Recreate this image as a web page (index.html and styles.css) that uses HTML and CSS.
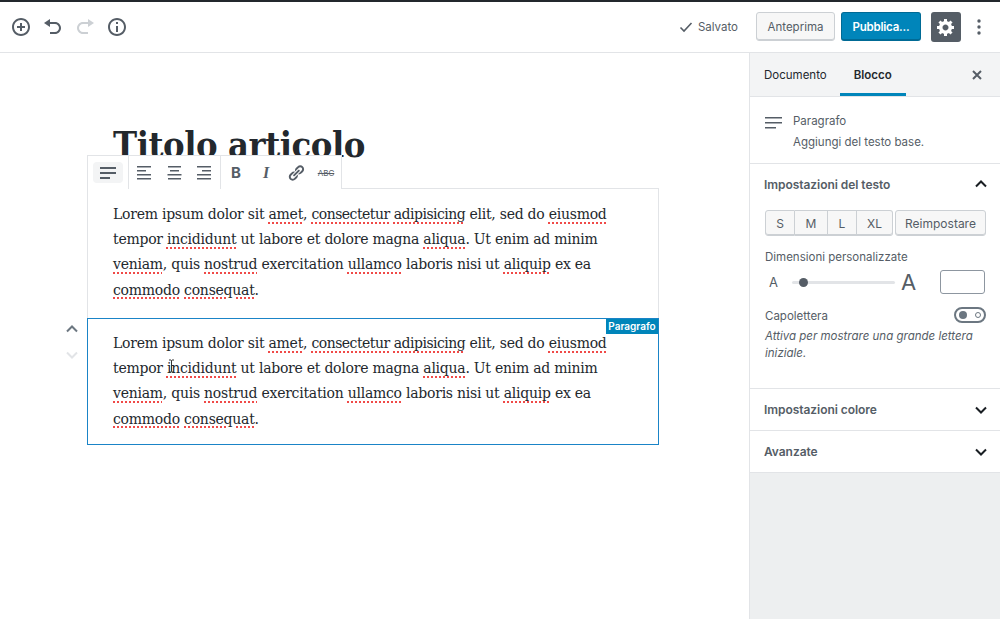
FILE: index.html
```html
<!DOCTYPE html>
<html lang="it">
<head>
<meta charset="utf-8">
<title>Titolo articolo</title>
<link rel="stylesheet" href="styles.css">
</head>
<body>
<div class="app">
  <header class="topbar">
    <div class="tools">
      <span class="tool"><svg width="20" height="20" viewBox="0 0 20 20"><path d="M10 1c-5 0-9 4-9 9s4 9 9 9 9-4 9-9-4-9-9-9zm0 16c-3.900 0-7-3.100-7-7s3.100-7 7-7 7 3.100 7 7-3.100 7-7 7zm1-11H9v3H6v2h3v3h2v-3h3V9h-3V6z"/></svg></span>
      <span class="tool"><svg width="20" height="20" viewBox="0 0 20 20"><path d="M12 5H7V2L1 6l6 4V7h5c2.200 0 4 1.800 4 4s-1.800 4-4 4H7v2h5c3.300 0 6-2.700 6-6s-2.700-6-6-6z"/></svg></span>
      <span class="tool off"><svg width="20" height="20" viewBox="0 0 20 20"><path d="M8 5h5V2l6 4-6 4V7H8c-2.200 0-4 1.800-4 4s1.800 4 4 4h5v2H8c-3.300 0-6-2.700-6-6s2.700-6 6-6z"/></svg></span>
      <span class="tool"><svg width="20" height="20" viewBox="0 0 20 20"><path d="M10 1c-5 0-9 4-9 9s4 9 9 9 9-4 9-9-4-9-9-9zm0 16c-3.900 0-7-3.100-7-7s3.100-7 7-7 7 3.100 7 7-3.100 7-7 7zM9 9h2v6H9V9zm0-4h2v2H9V5z"/></svg></span>
    </div>
    <div class="actions">
      <span class="saved"><svg width="14" height="14" viewBox="0 0 14 14"><path d="M1.500 7.500l3.500 3.500 7.500-8" fill="none" stroke="#555d66" stroke-width="1.600"/></svg>Salvato</span>
      <span class="btn preview">Anteprima</span>
      <span class="btn publish">Pubblica...</span>
      <span class="gear"><svg width="20" height="20" viewBox="0 0 20 20"><path d="M18 12h-2.180c-.17.700-.44 1.350-.81 1.930l1.540 1.540-2.100 2.100-1.540-1.540c-.58.360-1.230.630-1.910.790V19H8v-2.180c-.68-.16-1.330-.43-1.910-.79l-1.540 1.540-2.120-2.120 1.540-1.540c-.36-.58-.63-1.230-.79-1.910H1V9.030h2.170c.160-.7.440-1.350.800-1.940L2.430 5.550l2.100-2.100 1.540 1.540c.580-.37 1.240-.64 1.930-.81V2h3v2.180c.680.160 1.330.430 1.910.790l1.540-1.540 2.120 2.120-1.540 1.540c.360.590.640 1.240.800 1.940H18V12zm-8.500 1.500c1.660 0 3-1.340 3-3s-1.340-3-3-3-3 1.340-3 3 1.340 3 3 3z"/></svg></span>
      <span class="more"><svg width="4" height="16" viewBox="0 0 4 16"><circle cx="2" cy="2" r="1.700"/><circle cx="2" cy="8" r="1.700"/><circle cx="2" cy="14" r="1.700"/></svg></span>
    </div>
  </header>
  <div class="main">
    <main class="editor">
      <h1 class="post-title">Titolo articolo</h1>
      <div class="block">
        <div class="toolbar">
          <div class="group first">
            <span class="tb active"><svg width="16" height="12" viewBox="0 0 16 12"><path d="M0 0h16v2H0zM0 5h16v2H0zM0 10h10v2H0z"/></svg></span>
          </div>
          <div class="group mid">
            <span class="tb"><svg width="15" height="14" viewBox="0 0 15 14"><path d="M0 0h14v1.500H0zM0 4h9v1.500H0zM0 8h14v1.500H0zM0 12h14v1.500H0z"/></svg></span>
            <span class="tb"><svg width="15" height="14" viewBox="0 0 15 14"><path d="M1 0h13v1.500H1zM3 4h9v1.500H3zM0.500 8h14v1.500H.500zM1 12h13v1.500H1z"/></svg></span>
            <span class="tb"><svg width="15" height="14" viewBox="0 0 15 14"><path d="M1 0h14v1.500H1zM6 4h9v1.500H6zM1 8h14v1.500H1zM1 12h14v1.500H1z"/></svg></span>
          </div>
          <div class="group">
            <span class="tb glyph-b">B</span>
            <span class="tb glyph-i">I</span>
            <span class="tb"><svg width="18" height="18" viewBox="0 0 20 20"><path d="M17.740 2.760c1.680 1.690 1.680 4.410 0 6.100l-1.530 1.520c-1.120 1.120-2.700 1.470-4.140 1.090l2.620-2.610.76-.77.76-.76c.84-.84.84-2.200 0-3.040-.84-.85-2.200-.85-3.040 0l-.77.76-3.380 3.380c-.37-1.440-.02-3.020 1.100-4.140l1.520-1.530c1.690-1.680 4.420-1.680 6.100 0zM8.590 13.430l5.340-5.340c.42-.42.42-1.100 0-1.520-.44-.43-1.130-.39-1.530 0l-5.330 5.340c-.42.420-.42 1.100 0 1.520.44.430 1.130.390 1.520 0zm-.76 2.290l4.140-4.150c.380 1.440.030 3.020-1.090 4.140l-1.520 1.530c-1.690 1.680-4.410 1.680-6.100 0-1.680-1.680-1.680-4.420 0-6.100l1.530-1.520c1.120-1.120 2.700-1.470 4.140-1.100l-4.140 4.150c-.85.840-.85 2.200 0 3.050.840.840 2.200.840 3.040 0z"/></svg></span>
            <span class="tb glyph-s">ABC</span>
          </div>
        </div>
        <p class="para">Lorem ipsum dolor sit <span class="sp">amet</span>, <span class="sp t">consectetur</span> <span class="sp t">adipisicing</span> elit, sed do <span class="sp">eiusmod</span><br>tempor <span class="sp">incididunt</span> ut labore et dolore magna <span class="sp">aliqua</span>. Ut enim ad minim<br><span class="sp">veniam</span>, quis <span class="sp">nostrud</span> exercitation <span class="sp">ullamco</span> laboris nisi ut <span class="sp">aliquip</span> ex ea<br><span class="sp">commodo</span> <span class="sp">consequat</span>.</p>
      </div>
      <div class="block selected">
        <div class="mover">
          <svg width="14" height="10" viewBox="0 0 14 10"><path d="M2 7.500l5-5 5 5" fill="none" stroke="#6c7781" stroke-width="2"/></svg>
          <svg width="14" height="10" viewBox="0 0 14 10"><path d="M2 2.500l5 5 5-5" fill="none" stroke="#e2e4e7" stroke-width="2"/></svg>
        </div>
        <span class="badge">Paragrafo</span>
        <p class="para">Lorem ipsum dolor sit <span class="sp">amet</span>, <span class="sp t">consectetur</span> <span class="sp t">adipisicing</span> elit, sed do <span class="sp">eiusmod</span><br>tempor <span class="sp">incididunt</span> ut labore et dolore magna <span class="sp">aliqua</span>. Ut enim ad minim<br><span class="sp">veniam</span>, quis <span class="sp">nostrud</span> exercitation <span class="sp">ullamco</span> laboris nisi ut <span class="sp">aliquip</span> ex ea<br><span class="sp">commodo</span> <span class="sp">consequat</span>.</p>
        <svg class="ibeam" width="7" height="14" viewBox="0 0 7 14"><path d="M1 1h2l.500.500L4 1h2M3.500 1.500v11M1 13h2l.500-.5.500.500h2" fill="none" stroke="#333" stroke-width="1"/></svg>
      </div>
    </main>
    <aside class="sidebar">
      <div class="tabs">
        <span class="tab">Documento</span>
        <span class="tab current">Blocco</span>
        <svg class="close" width="10" height="10" viewBox="0 0 10 10"><path d="M1 1l8 8M9 1l-8 8" stroke="#555d66" stroke-width="2"/></svg>
      </div>
      <div class="card">
        <svg width="17" height="12" viewBox="0 0 17 12"><path d="M0 0h17v1.600H0zM0 5h17v1.600H0zM0 10h11v1.600H0z" fill="#555d66"/></svg>
        <div>
          <div class="card-title">Paragrafo</div>
          <div class="card-desc">Aggiungi del testo base.</div>
        </div>
      </div>
      <section class="panel open">
        <div class="panel-head"><span>Impostazioni del testo</span><svg width="12" height="8" viewBox="0 0 12 8"><path d="M1 6.500l5-5 5 5" fill="none" stroke="#191e23" stroke-width="2"/></svg></div>
        <div class="sizes">
          <div class="size-group">
            <span class="sz s">S</span><span class="sz m">M</span><span class="sz l">L</span><span class="sz xl">XL</span>
          </div>
          <span class="sz reset">Reimpostare</span>
        </div>
        <div class="label">Dimensioni personalizzate</div>
        <div class="slider-row">
          <span class="a-small">A</span>
          <span class="track"><span class="knob"></span></span>
          <span class="a-big">A</span>
          <span class="num"></span>
        </div>
        <div class="toggle-row">
          <span class="label-inline">Capolettera</span>
          <span class="toggle"><span class="dot"></span><span class="ring"></span></span>
        </div>
        <p class="help">Attiva per mostrare una grande lettera iniziale.</p>
      </section>
      <section class="panel closed">
        <span>Impostazioni colore</span><svg width="12" height="8" viewBox="0 0 12 8"><path d="M1 1.500l5 5 5-5" fill="none" stroke="#191e23" stroke-width="2"/></svg>
      </section>
      <section class="panel closed">
        <span>Avanzate</span><svg width="12" height="8" viewBox="0 0 12 8"><path d="M1 1.500l5 5 5-5" fill="none" stroke="#191e23" stroke-width="2"/></svg>
      </section>
    </aside>
  </div>
</div>
</body>
</html>
```

FILE: styles.css
```css
* { box-sizing: border-box; }
html, body { margin: 0; height: 100%; overflow: hidden; }
body { background: #fff; color: #191e23; font-family: Inter, "Liberation Sans", sans-serif; font-size: 11.500px; }
.app { height: 100vh; display: flex; flex-direction: column; }

.topbar { height: 53px; flex: none; border-top: 2px solid #23282d; border-bottom: 1px solid #e2e4e7; display: flex; align-items: center; justify-content: space-between; padding: 0 19px 1px 5px; }
.tools { display: flex; }
.tool { width: 32px; height: 32px; display: flex; align-items: center; justify-content: center; }
.tool svg { fill: #555d66; }
.tool.off svg { fill: #ccd0d4; }
.actions { display: flex; align-items: center; }
.saved { display: flex; align-items: center; gap: 5px; color: #555d66; margin-right: 18px; }
.btn { height: 29px; width: 80px; border-radius: 3px; display: flex; align-items: center; justify-content: center; padding-top: 1px; }
.preview { width: 79px; background: #f7f7f7; border: 1px solid #ccd0d4; box-shadow: inset 0 -1px 0 #ccd0d4; color: #555d66; margin-right: 6px; }
.publish { background: #0085ba; border: 1px solid #006a95; border-bottom-width: 2px; color: #fff; font-weight: 600; margin-right: 10px; letter-spacing: -.2px; padding-top: 2px; }
.gear { width: 30px; height: 30px; background: #555d66; border-radius: 3px; display: flex; align-items: center; justify-content: center; margin-right: 16px; }
.gear svg { fill: #fff; }
.more { display: flex; }
.more svg { fill: #555d66; }

.main { flex: 1; display: flex; min-height: 0; }
.editor { flex: 1; padding-top: 69px; }
.post-title { margin: 0 0 0 113px; height: 66px; font: 700 36px/44px "DejaVu Serif", serif; font-stretch: condensed; color: #23282d; letter-spacing: -.45px; white-space: nowrap; }
.block { position: relative; margin-left: 87px; width: 572px; height: 130px; border: 1px solid #e2e4e7; border-bottom: 0; padding: 13px 25px 0; }
.block.selected { height: 127px; padding-top: 12px; border: 1px solid #1a84c7; }
.para { margin: 0; font: 14px/25.200px "DejaVu Serif", serif; color: #23282d; white-space: nowrap; letter-spacing: -.25px; }
.sp { text-decoration: underline dotted #f04a48; text-decoration-thickness: 1.500px; text-underline-offset: 3px; }
.sp.t { letter-spacing: -.52px; }

.toolbar { position: absolute; left: -1px; top: -34px; height: 34px; display: flex; background: #fff; border: 1px solid #e2e4e7; border-bottom: 0; }
.group { display: flex; align-items: center; border-right: 1px solid #e2e4e7; height: 100%; }
.group:last-child { border-right: 0; }
.group.first { padding: 0 5px; }
.group.mid { padding: 0 1.500px 0 1px; }
.mid .tb { width: 29.500px; }
.tb { width: 30px; height: 21px; display: flex; align-items: center; justify-content: center; color: #555d66; }
.tb svg { fill: #555d66; }
.tb.active { background: #f3f4f5; border-radius: 4px; }
.glyph-b { font: 700 15px Inter, sans-serif; }
.glyph-i { font: italic 700 16px "Liberation Serif", serif; }
.glyph-s { font: 8px Inter, sans-serif; text-decoration: line-through; }

.mover { position: absolute; left: -23px; top: 5px; display: flex; flex-direction: column; gap: 16px; }
.badge { position: absolute; right: 0; top: 0; height: 15px; width: 52px; background: #0085ba; color: #fff; font-size: 10px; font-weight: 600; line-height: 15px; text-align: center; }
.ibeam { position: absolute; left: 80px; top: 40px; }

.sidebar { width: 251px; flex: none; border-left: 1px solid #e2e4e7; background: #edeff0; }
.tabs { height: 44px; background: #f3f4f5; border-bottom: 1px solid #e2e4e7; display: flex; align-items: center; position: relative; padding-left: 14px; }
.tab { margin-right: 13px; height: 100%; display: flex; align-items: center; color: #23282d; }
.tab.current { font-weight: 600; padding: 0 14px; box-shadow: inset 0 -3px 0 #0085ba; }
.close { position: absolute; right: 18px; top: 17px; }
.card { height: 67px; background: #fff; border-bottom: 1px solid #e2e4e7; display: flex; gap: 11px; padding: 20px 15px 0; }
.card > svg { flex: none; }
.card-title { color: #555d66; margin-top: -4px; line-height: 16px; }
.card-desc { color: #555d66; margin-top: 5px; line-height: 16px; }
.panel { background: #fff; border-bottom: 1px solid #e2e4e7; }
.panel.open { height: 225px; padding: 0 14px 0 15px; }
.panel.closed { height: 42px; display: flex; align-items: center; justify-content: space-between; padding: 0 13px 0 14px; font-weight: 600; font-size: 12px; letter-spacing: -.05px; color: #555d66; }
.panel-head { height: 46px; padding-bottom: 6px; display: flex; align-items: center; justify-content: space-between; font-weight: 600; font-size: 12px; letter-spacing: -.05px; color: #555d66; margin: 0 -1px; }
.sizes { display: flex; gap: 2px; }
.size-group { display: flex; }
.sz { height: 26px; display: flex; align-items: center; justify-content: center; background: #f7f7f7; border: 1px solid #ccd0d4; box-shadow: inset 0 -1px 0 #ccd0d4; color: #555d66; font-size: 12px; }
.size-group .sz + .sz { border-left: 0; }
.s { width: 30px; border-radius: 3px 0 0 3px; }
.m { width: 33px; }
.l { width: 29px; }
.xl { width: 36px; border-radius: 0 3px 3px 0; }
.reset { width: 91px; border-radius: 3px; }
.label { margin-top: 14px; height: 15px; line-height: 15px; color: #555d66; }
.slider-row { height: 24px; margin-top: 5px; display: flex; align-items: center; }
.a-small { width: 18px; padding-left: 4px; color: #555d66; font-size: 13px; }
.track { width: 103px; margin-left: 9px; height: 3px; background: #e2e4e7; border-radius: 2px; position: relative; }
.knob { position: absolute; left: 7px; top: -3px; width: 9px; height: 9px; border-radius: 50%; background: #555d66; }
.a-big { width: 45px; padding-left: 6px; color: #555d66; font-size: 22px; }
.num { width: 45px; height: 24px; border: 1px solid #8d96a0; border-radius: 3px; }
.toggle-row { margin-top: 13px; height: 16px; display: flex; align-items: center; justify-content: space-between; }
.label-inline { color: #555d66; padding-top: 2px; }
.toggle { width: 32px; height: 16px; border: 2px solid #6c7781; border-radius: 8px; display: flex; align-items: center; justify-content: space-between; padding: 0 3px; }
.dot { width: 8px; height: 8px; border-radius: 50%; background: #6c7781; }
.ring { width: 6px; height: 6px; border-radius: 50%; border: 1px solid #6c7781; }
.help { margin: 5px 0 0; font-style: italic; line-height: 17px; color: #555d66; }
```
